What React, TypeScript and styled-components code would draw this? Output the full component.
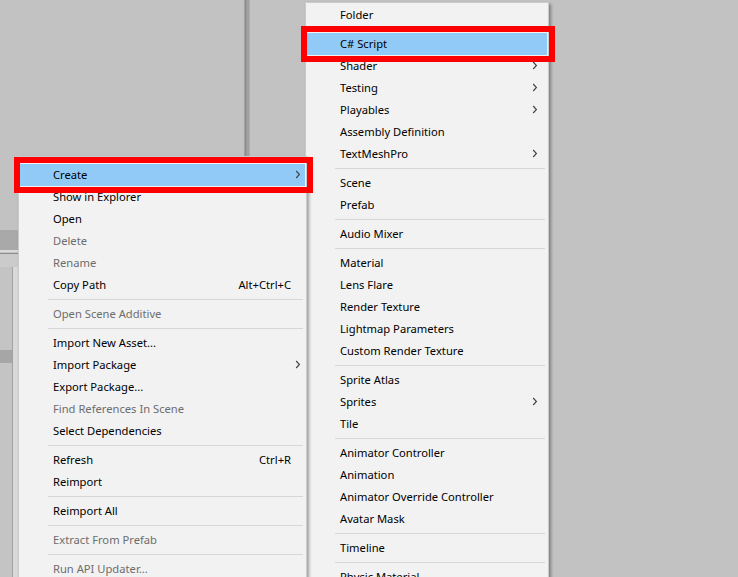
import React from "react";
import styled, { createGlobalStyle } from "styled-components";

type Entry =
  | "sep"
  | {
      label: string;
      disabled?: boolean;
      shortcut?: string;
      sub?: boolean;
      active?: boolean;
    };

const assetItems: Entry[] = [
  { label: "Create", sub: true, active: true },
  { label: "Show in Explorer" },
  { label: "Open" },
  { label: "Delete", disabled: true },
  { label: "Rename", disabled: true },
  { label: "Copy Path", shortcut: "Alt+Ctrl+C" },
  "sep",
  { label: "Open Scene Additive", disabled: true },
  "sep",
  { label: "Import New Asset..." },
  { label: "Import Package", sub: true },
  { label: "Export Package..." },
  { label: "Find References In Scene", disabled: true },
  { label: "Select Dependencies" },
  "sep",
  { label: "Refresh", shortcut: "Ctrl+R" },
  { label: "Reimport" },
  "sep",
  { label: "Reimport All" },
  "sep",
  { label: "Extract From Prefab", disabled: true },
  "sep",
  { label: "Run API Updater...", disabled: true },
];

const createItems: Entry[] = [
  { label: "Folder" },
  "sep",
  { label: "C# Script", active: true },
  { label: "Shader", sub: true },
  { label: "Testing", sub: true },
  { label: "Playables", sub: true },
  { label: "Assembly Definition" },
  { label: "TextMeshPro", sub: true },
  "sep",
  { label: "Scene" },
  { label: "Prefab" },
  "sep",
  { label: "Audio Mixer" },
  "sep",
  { label: "Material" },
  { label: "Lens Flare" },
  { label: "Render Texture" },
  { label: "Lightmap Parameters" },
  { label: "Custom Render Texture" },
  "sep",
  { label: "Sprite Atlas" },
  { label: "Sprites", sub: true },
  { label: "Tile" },
  "sep",
  { label: "Animator Controller" },
  { label: "Animation" },
  { label: "Animator Override Controller" },
  { label: "Avatar Mask" },
  "sep",
  { label: "Timeline" },
  "sep",
  { label: "Physic Material" },
];

const GlobalStyle = createGlobalStyle`
  html, body {
    margin: 0;
    padding: 0;
    background: #c2c2c2;
  }
  body {
    font-family: "Noto Sans", "Open Sans", sans-serif;
  }
`;

const Page = styled.div`
  position: relative;
  width: 738px;
  height: 577px;
  overflow: hidden;
  background: #c2c2c2;
  display: flex;
  flex-direction: column;
`;

const TopArea = styled.div`
  height: 156px;
  flex: none;
  display: flex;
`;

const Blank = styled.div<{ $w?: number }>`
  width: ${(p) => (p.$w ? `${p.$w}px` : "auto")};
  flex: ${(p) => (p.$w ? "none" : "1")};
`;

const Splitter = styled.div`
  width: 6px;
  background: linear-gradient(
    to right,
    #b4b4b4 0,
    #8e8e8e 1px,
    #8e8e8e 2px,
    #a2a2a2 3px,
    #a2a2a2 5px,
    #b8b8b8 6px
  );
`;

const LowerArea = styled.div`
  flex: 1;
  display: flex;
`;

const ProjectPane = styled.div`
  width: 244px;
  display: flex;
  flex-direction: column;
  padding-top: 74px;
`;

const Toolbar = styled.div`
  height: 20px;
  background: #a9a9a9;
`;

const ToolbarEdge = styled.div`
  height: 1px;
  border-top: 2px solid #dadada;
  border-bottom: 1px solid #8d8d8d;
`;

const Strip = styled.div`
  height: 13px;
  background: #cbcbcb;
`;

const Panel = styled.div`
  flex: 1;
  display: flex;
`;

const SideColumn = styled.div`
  width: 12px;
  background: #c4c4c4;
  border-right: 1px solid #a3a3a3;
  padding-top: 83px;
`;

const SideMark = styled.div`
  height: 13px;
  background: #a6a6a6;
`;

const PanelBody = styled.div`
  flex: 1;
  background: #d9d9d9;
`;

const Menu = styled.div<{ $x: number; $y: number; $w: number; $pt: number; $z: number }>`
  position: absolute;
  left: ${(p) => p.$x}px;
  top: ${(p) => p.$y}px;
  width: ${(p) => p.$w}px;
  bottom: -40px;
  box-sizing: border-box;
  z-index: ${(p) => p.$z};
  padding: ${(p) => p.$pt}px 1px 0 1px;
  background: #f2f2f2;
  border: 1px solid #cbcbcb;
  box-shadow: 2px 2px 3px rgba(0, 0, 0, 0.35);
  font-family: "Noto Sans", "Open Sans", sans-serif;
  font-size: 11.2px;
`;

const Row = styled.div<{ $active?: boolean; $disabled?: boolean; $pr: number }>`
  position: relative;
  height: 22px;
  box-sizing: border-box;
  display: flex;
  align-items: center;
  padding: 0 ${(p) => p.$pr}px 1px 33px;
  background: ${(p) => (p.$active ? "#91c9f7" : "transparent")};
  color: ${(p) => (p.$disabled ? "#6d6d6d" : "#000")};
  white-space: nowrap;
`;

const Label = styled.span`
  flex: 1;
`;

const Shortcut = styled.span``;

const ArrowSlot = styled.span`
  width: 14px;
  display: flex;
  justify-content: center;
  align-items: center;
`;

const Separator = styled.div`
  height: 1px;
  margin: 3px 2px 3px 28px;
  background: #d7d7d7;
`;

const Marker = styled.div`
  position: absolute;
  top: -7px;
  bottom: -7px;
  left: -6px;
  right: -8px;
  border: 6px solid #fe0000;
  box-sizing: border-box;
  pointer-events: none;
  z-index: 5;
`;

const Chevron = () => (
  <svg width="6" height="9" viewBox="0 0 6 9">
    <polyline points="1.2,1 4.4,4.5 1.2,8" fill="none" stroke="#444" strokeWidth="1.2" />
  </svg>
);

const MenuList = ({ items, arrowPad }: { items: Entry[]; arrowPad: number }) => (
  <>
    {items.map((it, i) =>
      it === "sep" ? (
        <Separator key={i} />
      ) : (
        <Row key={i} $active={it.active} $disabled={it.disabled} $pr={arrowPad}>
          <Label>{it.label}</Label>
          {it.shortcut && <Shortcut>{it.shortcut}</Shortcut>}
          <ArrowSlot>{it.sub && <Chevron />}</ArrowSlot>
          {it.active && <Marker />}
        </Row>
      )
    )}
  </>
);

export default function App() {
  return (
    <>
      <GlobalStyle />
      <Page>
        <TopArea>
          <Blank $w={244} />
          <Splitter />
          <Blank />
        </TopArea>
        <LowerArea>
          <ProjectPane>
            <Toolbar />
            <ToolbarEdge />
            <Strip />
            <Panel>
              <SideColumn>
                <SideMark />
              </SideColumn>
              <PanelBody />
            </Panel>
          </ProjectPane>
          <Blank />
        </LowerArea>

        <Menu $x={18} $y={156} $w={289} $pt={7} $z={2}>
          <MenuList items={assetItems} arrowPad={0} />
        </Menu>
        <Menu $x={305} $y={2} $w={244} $pt={1} $z={1}>
          <MenuList items={createItems} arrowPad={5} />
        </Menu>
      </Page>
    </>
  );
}
